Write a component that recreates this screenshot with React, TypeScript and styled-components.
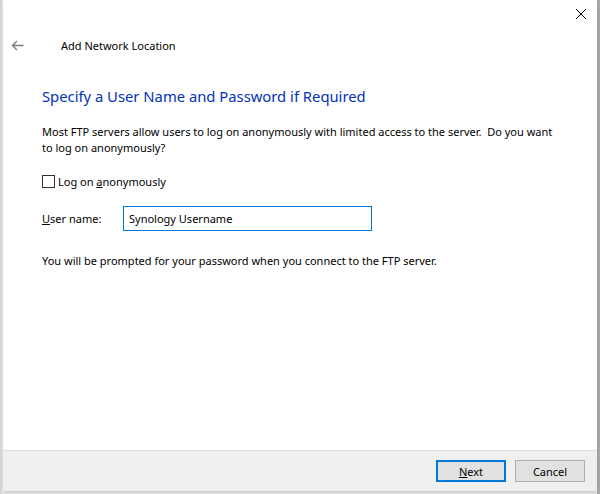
import React from "react";
import styled, { createGlobalStyle } from "styled-components";

const Global = createGlobalStyle`
  html, body { margin: 0; padding: 0; }
  body { width: 600px; height: 494px; overflow: hidden; background: #e4e4e4; }
  * { box-sizing: border-box; }
`;

const font = `"Segoe UI", "Noto Sans", "Open Sans", sans-serif`;

const Stage = styled.div`
  width: 600px;
  height: 494px;
  padding: 0 3px 3px 3px;
  background: linear-gradient(to right, #d0d0d0, #ececec 3px, #ececec 597px, #a9a9a9 597px);
  display: flex;
`;

const Window = styled.div`
  flex: 1;
  background: #fff;
  display: flex;
  flex-direction: column;
  font-family: ${font};
  font-size: 11px;
  color: #000;
  box-shadow: 0 2px 3px rgba(0,0,0,0.15);
`;

const TopBar = styled.div`
  height: 35px;
  display: flex;
  justify-content: flex-end;
  padding: 8px 10px 0 0;
`;

const CloseBtn = styled.div`
  width: 12px;
  height: 12px;
  display: flex;
`;

const TitleRow = styled.div`
  display: flex;
  align-items: center;
  height: 20px;
`;

const BackBtn = styled.div`
  width: 58px;
  padding-left: 8px;
  display: flex;
  align-items: center;
`;

const Title = styled.div`
  font-size: 11px;
  color: #000;
`;

const Content = styled.div`
  flex: 1;
  padding: 30px 38px 0 39px;
  display: flex;
  flex-direction: column;
`;

const Heading = styled.h1`
  margin: 0;
  font-weight: normal;
  font-size: 14.8px;
  line-height: 22px;
  color: #0033bc;
`;

const Para = styled.p<{ $top: number }>`
  margin: ${(p) => p.$top}px 0 0 0;
  line-height: 16px;
`;

const CheckRow = styled.label`
  margin-top: 17px;
  display: flex;
  align-items: center;
  gap: 3px;
  height: 16px;
`;

const Box = styled.span`
  width: 13px;
  height: 13px;
  border: 1px solid #333;
  background: #fff;
`;

const FieldRow = styled.div`
  margin-top: 17px;
  display: flex;
  align-items: center;
`;

const FieldLabel = styled.span`
  width: 81px;
`;

const Input = styled.div`
  width: 249px;
  height: 25px;
  border: 1px solid #0078d7;
  padding: 0 5px;
  display: flex;
  align-items: center;
`;

const U = styled.span`
  text-decoration: underline;
`;

const Footer = styled.div`
  height: 41px;
  background: #efefef;
  border-top: 1px solid #dfdfdf;
  display: flex;
  justify-content: flex-end;
  align-items: flex-start;
  padding: 9px 12px 0 0;
  gap: 9px;
`;

const Button = styled.div<{ $primary?: boolean }>`
  width: 70px;
  height: 22px;
  display: flex;
  align-items: center;
  justify-content: center;
  background: #e1e1e1;
  border: ${(p) => (p.$primary ? "2px solid #0078d7" : "1px solid #adadad")};
  font-size: 11px;
`;

export default function App() {
  return (
    <>
      <Global />
      <Stage>
        <Window>
          <TopBar>
            <CloseBtn>
              <svg width="12" height="12" viewBox="0 0 12 12">
                <path d="M1 1L11 11M11 1L1 11" stroke="#000" strokeWidth="1" />
              </svg>
            </CloseBtn>
          </TopBar>
          <TitleRow>
            <BackBtn>
              <svg width="13" height="11" viewBox="0 0 13 11">
                <path d="M12.5 5.5H1.5M6 1L1.5 5.5L6 10" stroke="#7a7a7a" strokeWidth="1.3" fill="none" />
              </svg>
            </BackBtn>
            <Title>Add Network Location</Title>
          </TitleRow>
          <Content>
            <Heading>Specify a User Name and Password if Required</Heading>
            <Para $top={17}>
              Most FTP servers allow users to log on anonymously with limited access to the server.&nbsp; Do you want to log on anonymously?
            </Para>
            <CheckRow>
              <Box />
              <span>Log on <U>a</U>nonymously</span>
            </CheckRow>
            <FieldRow>
              <FieldLabel><U>U</U>ser name:</FieldLabel>
              <Input>Synology Username</Input>
            </FieldRow>
            <Para $top={22}>
              You will be prompted for your password when you connect to the FTP server.
            </Para>
          </Content>
          <Footer>
            <Button $primary><span><U>N</U>ext</span></Button>
            <Button>Cancel</Button>
          </Footer>
        </Window>
      </Stage>
    </>
  );
}
